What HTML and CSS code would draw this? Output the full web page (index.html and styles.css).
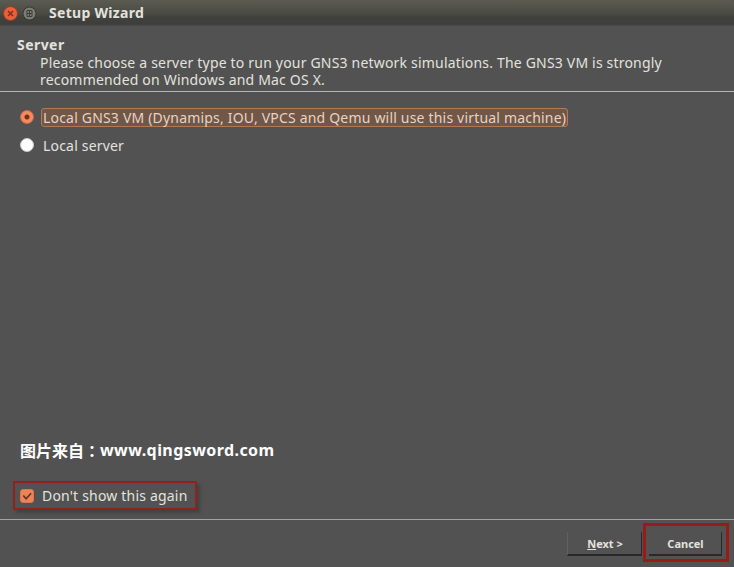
FILE: index.html
```html
<!DOCTYPE html>
<html lang="en">
<head>
<meta charset="utf-8">
<title>Setup Wizard</title>
<link rel="stylesheet" href="styles.css">
</head>
<body>
<main class="window">
  <header class="titlebar">
    <svg class="controls" width="40" height="25" viewBox="0 0 40 25">
      <circle cx="10.5" cy="12.5" r="7" fill="#e9603d" stroke="#913c27"/>
      <path d="M8 10l5 5M13 10l-5 5" stroke="#842b1a" stroke-width="1.5"/>
      <circle cx="29.5" cy="12.5" r="6.5" fill="#7c7c74" stroke="#383933"/>
      <path d="M27 9.5h5v6h-5zM27 12.5h5M29.5 9.5v6" fill="none" stroke="#3d3e38"/>
    </svg>
    <h1 class="title">Setup Wizard</h1>
  </header>
  <section class="intro">
    <h2 class="heading">Server</h2>
    <p class="description"><span class="line">Please choose a server type to run your GNS3 network simulations. The GNS3 VM is strongly</span><span class="line">recommended on Windows and Mac OS X.</span></p>
  </section>
  <section class="content">
    <div class="option">
      <span class="radio selected"></span>
      <span class="option-label focused">Local GNS3 VM (Dynamips, IOU, VPCS and Qemu will use this virtual machine)</span>
    </div>
    <div class="option">
      <span class="radio"></span>
      <span class="option-label">Local server</span>
    </div>
    <p class="credit"><span class="credit-cjk">图片来自<span class="colon">：</span></span><span class="credit-url">www.qingsword.com</span></p>
    <div class="remember">
      <svg class="checkbox" width="14" height="14" viewBox="0 0 14 14">
        <rect x=".5" y=".5" width="13" height="13" rx="2.5" fill="#ee8355" stroke="#d9764d"/>
        <path d="M3.3 6.5l2.8 3.2 5-5.5" fill="none" stroke="#5e3425" stroke-width="1.7"/>
      </svg>
      <span class="remember-label">Don't show this again</span>
    </div>
  </section>
  <footer class="actions">
    <div class="button next"><span><u>N</u>ext &gt;</span></div>
    <div class="highlight"><div class="button cancel"><span>Cancel</span></div></div>
  </footer>
</main>
</body>
</html>
```
FILE: styles.css
```css
* { box-sizing: border-box; }
body {
  margin: 0;
  background: #525252;
  color: #e3e2df;
  font: 14px/17px "Noto Sans", "Noto Sans CJK SC", sans-serif;
  letter-spacing: .19px;
}
h1, h2, p { margin: 0; font-size: inherit; }
.window { display: flex; flex-direction: column; width: 734px; height: 567px; overflow: hidden; }
.titlebar {
  display: flex;
  align-items: center;
  height: 26px;
  background: linear-gradient(#5b5b51 0, #494a42 14px, #41413c 17px, #3e3e3b 24px, #4a4a48 26px);
  border-top-right-radius: 4px;
}
.title { margin: -2px 0 0 9px; font-size: 14px; letter-spacing: .3px; }
.intro { height: 66px; padding: 10px 0 0 17px; border-bottom: 1px solid #b6b6b6; }
.heading { height: 18px; letter-spacing: .45px; }
.description { padding-left: 23px; }
.line { display: block; white-space: nowrap; }
.content { display: flex; flex-direction: column; height: 428px; padding-top: 15px; border-bottom: 1px solid #a4a4a4; }
.option { display: flex; align-items: center; height: 20px; margin-bottom: 8px; padding-left: 20px; }
.radio { width: 14px; height: 14px; border: 1px solid #c8c8c8; border-radius: 50%; background: #fff; }
.radio.selected { border-color: #ce6c49; background: radial-gradient(circle, #74301f 0 2px, #f58a5c 3px); }
.option-label { margin-left: 7px; height: 19px; padding: 0 1px; border: 1px solid transparent; white-space: nowrap; line-height: 17px; }
.option-label.focused { width: 527px; border-color: #b37957; border-radius: 3px; background: #715747; color: #ead2bf; }
.credit { display: flex; height: 24px; margin: 275px 0 0 20px; color: #fff; font-size: 16px; line-height: 24px; font-weight: 700; white-space: nowrap; letter-spacing: 0; }
.credit-cjk { width: 80px; font-family: "Noto Sans CJK SC", sans-serif; }
.colon { font-family: "Noto Sans CJK TC", sans-serif; }
.credit-url { letter-spacing: .42px; }
.remember {
  display: flex;
  align-items: center;
  width: 184px;
  height: 29px;
  margin: 19px 0 0 13px;
  padding-left: 5px;
  border: 2px solid #92201b;
  box-shadow: 3px 3px 3px #424242;
}
.remember-label { margin-left: 8px; white-space: nowrap; }
.actions { display: flex; padding-left: 567px; font-size: 11px; font-weight: 700; letter-spacing: 0; }
.button { display: flex; align-items: center; justify-content: center; padding: 2px 0 0 1px; border: solid #292929; border-width: 0 1px 2px 0; line-height: 16px; }
.next { width: 75px; height: 24px; margin-top: 12px; border-left: 1px solid #606060; }
.highlight { width: 86px; height: 39px; margin: 3px 0 0 1px; padding: 6px 4px 0 3px; border: 3px solid #991b18; }
.cancel { width: 73px; height: 24px; }
```
